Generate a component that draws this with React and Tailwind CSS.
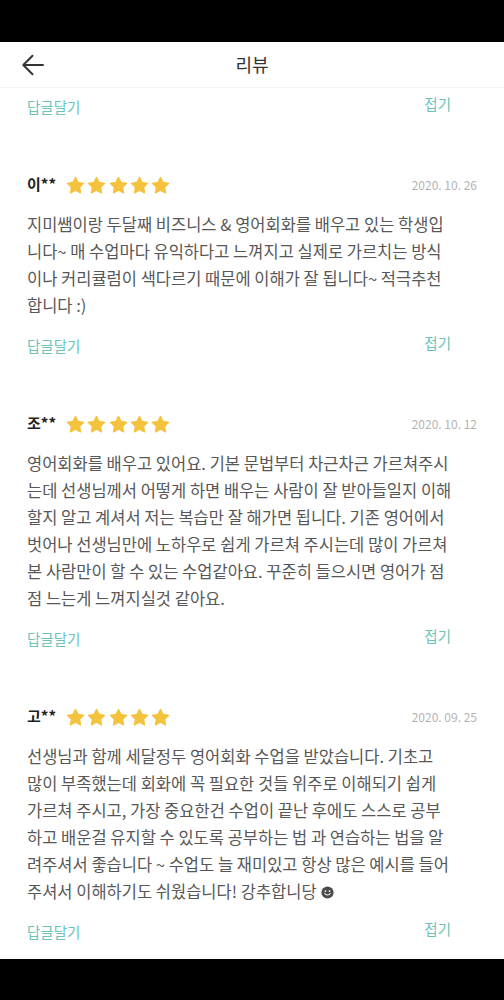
import React from "react";

const FONT = { fontFamily: '"Noto Sans CJK KR", "Noto Sans", sans-serif' };

function Star() {
  return (
    <svg width="21" height="21" viewBox="0 0 24 24" className="block">
      <path
        d="M12 2.8l2.85 5.8 6.4.93-4.63 4.5 1.1 6.37L12 17.4l-5.72 3.0 1.1-6.37-4.63-4.5 6.4-.93z"
        fill="#f5c23e"
        stroke="#f5c23e"
        strokeWidth="1.6"
        strokeLinejoin="round"
      />
    </svg>
  );
}

function Smile() {
  return (
    <svg width="13" height="13" viewBox="0 0 16 16" className="inline-block align-[-1px] ml-[4px]">
      <circle cx="8" cy="8" r="7.5" fill="#4a4a4a" />
      <circle cx="5.5" cy="6.3" r="1.1" fill="#fff" />
      <circle cx="10.5" cy="6.3" r="1.1" fill="#fff" />
      <path d="M4.6 9.2c1.8 2.4 5 2.4 6.8 0" stroke="#fff" strokeWidth="1.3" fill="none" strokeLinecap="round" />
    </svg>
  );
}

function Actions() {
  return (
    <div className="flex justify-between h-[24px] items-center text-[14.5px] text-[#6cc4b7]">
      <span>답글달기</span>
      <span className="mr-[26px] -mt-[7px]">접기</span>
    </div>
  );
}

function Review({ name, date, lines, smile }) {
  return (
    <div className="mt-[53px]">
      <div className="flex items-center h-[24px]">
        <span className="text-[15px] font-bold text-[#222] w-[38px]">{name}</span>
        <div className="flex gap-[0.3px] mt-[3px]">
          <Star />
          <Star />
          <Star />
          <Star />
          <Star />
        </div>
        <span className="ml-auto text-[12px] text-[#b3b3b3] mt-[2px]">{date}</span>
      </div>
      <div className="mt-[15px] text-[16.5px] leading-[27px] text-[#575757] whitespace-nowrap">
        {lines.map((l, i) => (
          <div key={i}>
            {l}
            {smile && i === lines.length - 1 ? <Smile /> : null}
          </div>
        ))}
      </div>
      <div className="mt-[15px]">
        <Actions />
      </div>
    </div>
  );
}

export default function App() {
  return (
    <div className="w-[504px] h-[1000px] flex flex-col bg-white overflow-hidden" style={FONT}>
      <div className="h-[42px] bg-black shrink-0" />
      <div className="h-[46px] shrink-0 flex items-center relative border-b border-[#f4f4f4]">
        <svg width="24" height="24" viewBox="0 0 24 24" className="ml-[21px]">
          <path d="M22 12H2.5M11.5 2.8L2.3 12l9.2 9.2" stroke="#333" strokeWidth="2" fill="none" strokeLinecap="round" strokeLinejoin="round" />
        </svg>
        <div className="absolute left-0 right-0 text-center text-[18px] text-[#333] pointer-events-none">리뷰</div>
      </div>
      <div className="flex-1 overflow-hidden px-[27px] pt-[7px]">
        <Actions />
        <Review
          name="이**"
          date="2020. 10. 26"
          lines={[
            "지미쌤이랑 두달째 비즈니스 & 영어회화를 배우고 있는 학생입",
            "니다~ 매 수업마다 유익하다고 느껴지고 실제로 가르치는 방식",
            "이나 커리큘럼이 색다르기 때문에 이해가 잘 됩니다~ 적극추천",
            "합니다 :)",
          ]}
        />
        <Review
          name="조**"
          date="2020. 10. 12"
          lines={[
            "영어회화를 배우고 있어요. 기본 문법부터 차근차근 가르쳐주시",
            "는데 선생님께서 어떻게 하면 배우는 사람이 잘 받아들일지 이해",
            "할지 알고 계셔서 저는 복습만 잘 해가면 됩니다. 기존 영어에서",
            "벗어나 선생님만에 노하우로 쉽게 가르쳐 주시는데 많이 가르쳐",
            "본 사람만이 할 수 있는 수업같아요. 꾸준히 들으시면 영어가 점",
            "점 느는게 느껴지실것 같아요.",
          ]}
        />
        <Review
          name="고**"
          date="2020. 09. 25"
          smile
          lines={[
            "선생님과 함께 세달정두 영어회화 수업을 받았습니다. 기초고",
            "많이 부족했는데 회화에 꼭 필요한 것들 위주로 이해되기 쉽게",
            "가르쳐 주시고, 가장 중요한건 수업이 끝난 후에도 스스로 공부",
            "하고 배운걸 유지할 수 있도록 공부하는 법 과 연습하는 법을 알",
            "려주셔서 좋습니다 ~ 수업도 늘 재미있고 항상 많은 예시를 들어",
            "주셔서 이해하기도 쉬웠습니다! 강추합니당",
          ]}
        />
      </div>
      <div className="h-[41px] bg-black shrink-0" />
    </div>
  );
}
